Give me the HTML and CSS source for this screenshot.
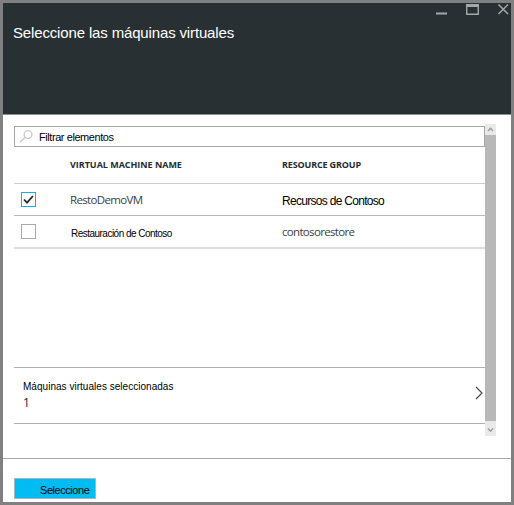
FILE: index.html
```html
<!DOCTYPE html>
<html lang="es">
<head>
<meta charset="utf-8">
<title>Seleccione las máquinas virtuales</title>
<link rel="stylesheet" href="styles.css">
</head>
<body>
<div class="window">
  <header class="header">
    <div class="controls">
      <svg class="control" width="13" height="13" viewBox="0 0 13 13"><path d="M1 10.5h11" stroke-width="2"/></svg>
      <svg class="control" width="13" height="13" viewBox="0 0 13 13"><path d="M.75 1v10.25h11.5V1M0 2.500h13" stroke-width="1.400"/><path d="M0 2.500h13" stroke-width="3"/></svg>
      <svg class="control" width="13" height="13" viewBox="0 0 13 13"><path d="M1.500 1.500l9.500 9.500M11 1.500l-9.500 9.500" stroke-width="1.500"/></svg>
    </div>
    <h1 class="title">Seleccione las máquinas virtuales</h1>
  </header>
  <main class="body">
    <div class="content">
      <div class="search">
        <svg width="15" height="15" viewBox="0 0 15 15"><circle cx="9" cy="5.500" r="3.900"/><path d="M6.200 8.300L1.200 13"/></svg>
        <span class="search-text">Filtrar elementos</span>
      </div>
      <div class="row head">
        <span></span>
        <span class="th">VIRTUAL MACHINE NAME</span>
        <span class="th group-head">RESOURCE GROUP</span>
      </div>
      <div class="row first">
        <span class="check checked"><svg width="13" height="13" viewBox="0 0 13 13"><path d="M2 6.500l3 3.200 6-6.700"/></svg></span>
        <span class="segoe vm">RestoDemoVM</span>
        <span class="group">Recursos de Contoso</span>
      </div>
      <div class="row second">
        <span class="check"></span>
        <span class="vm-small">Restauración de Contoso</span>
        <span class="segoe store">contosorestore</span>
      </div>
      <div class="summary">
        <div>
          <div class="summary-label">Máquinas virtuales seleccionadas</div>
          <div class="summary-count">1</div>
        </div>
        <svg width="9" height="14" viewBox="0 0 9 14"><path d="M1 1l6 6-6 6"/></svg>
      </div>
    </div>
    <div class="scrollbar">
      <svg width="11" height="11" viewBox="0 0 11 11"><path d="M3 7l2.500-2.700L8 7"/></svg>
      <div class="thumb"></div>
      <svg width="11" height="15" viewBox="0 0 11 15"><path d="M3 7.500l2.500 2.700L8 7.500"/></svg>
    </div>
  </main>
  <footer class="footer"><button class="select">Seleccione</button></footer>
</div>
</body>
</html>
```
FILE: styles.css
```css
* { box-sizing: border-box; }
body { margin: 0; font-family: "Liberation Sans", Arial, sans-serif; color: #000; }
svg { display: block; fill: none; flex: none; }
span, h1 { white-space: nowrap; }
.window { width: 514px; height: 505px; border: 3px solid #808080; background: #fff; display: flex; flex-direction: column; }
.header { height: 112px; background: #293034; border-bottom: 1px solid #8c8e90; }
.controls { display: flex; justify-content: flex-end; gap: 18px; padding-right: 1px; height: 21px; }
.control { stroke: #a5a8a9; }
.title { margin: 0 0 0 10px; color: #fff; font-weight: 400; font-size: 15px; line-height: 18px; letter-spacing: -.15px; }
.body { display: flex; height: 343px; padding: 9px 0 0 11px; }
.content { width: 471px; padding-top: 2px; }
.search { height: 21px; border: 1px solid #a6a6a6; display: flex; align-items: center; padding-left: 4px; }
.search svg { stroke: #c9c9c9; stroke-width: 1.3; }
.search-text { font-size: 11px; margin-left: 5px; padding-top: 1px; letter-spacing: -.43px; }
.row { display: grid; grid-template-columns: 56px 212px 1fr; align-items: center; border-bottom: 1px solid #b9b9b9; }
.head { height: 37px; border-color: #cdcdcd; }
.first { height: 32px; }
.second { height: 33px; border-bottom: 2px solid #dedede; }
.th { font: 700 9px/12px "Open Sans", sans-serif; color: #252b31; letter-spacing: -.03px; }
.group-head { letter-spacing: -.15px; }
.segoe { font: 400 12px/16px "Open Sans", sans-serif; color: #3b4046; }
.vm { font-size: 11.5px; letter-spacing: -.65px; }
.store { font-size: 11.5px; letter-spacing: -.68px; padding-top: 1px; }
.group { font-size: 12px; padding-top: 3px; letter-spacing: -.7px; }
.vm-small { font-size: 10px; padding: 3px 0 0 1px; letter-spacing: -.52px; }
.check { width: 15px; height: 15px; margin-left: 7px; border: 1px solid #aaa; }
.checked { border-color: #12aee6; }
.check svg { stroke: #22282c; stroke-width: 1.8; }
.summary { margin-top: 118px; height: 57px; border-top: 1px solid #b0b0b0; border-bottom: 1px solid #b0b0b0; display: flex; justify-content: space-between; align-items: center; padding: 0 1px 0 9px; }
.summary svg { stroke: #44494e; stroke-width: 1.2; margin-bottom: 5px; }
.summary-label { font-size: 10px; line-height: 14px; letter-spacing: .03px; }
.summary-count { font: 12px/18px "Open Sans", sans-serif; color: #222; }
.scrollbar { width: 11px; height: 312px; display: flex; flex-direction: column; background: #e9e9e9; }
.scrollbar svg { stroke: #999; stroke-width: 1.3; }
.thumb { flex: 1; background: #b8b8b8; }
.footer { border-top: 1px solid #aaa; height: 44px; padding: 19px 0 0 11px; }
.select { display: block; width: 82px; height: 21px; padding: 3px 0 0 25px; border: 1px solid #a8b8bd; background: #00bcf2; text-align: left; font: 11px/14px "Liberation Sans", Arial, sans-serif; letter-spacing: -.45px; color: #000; }
```
